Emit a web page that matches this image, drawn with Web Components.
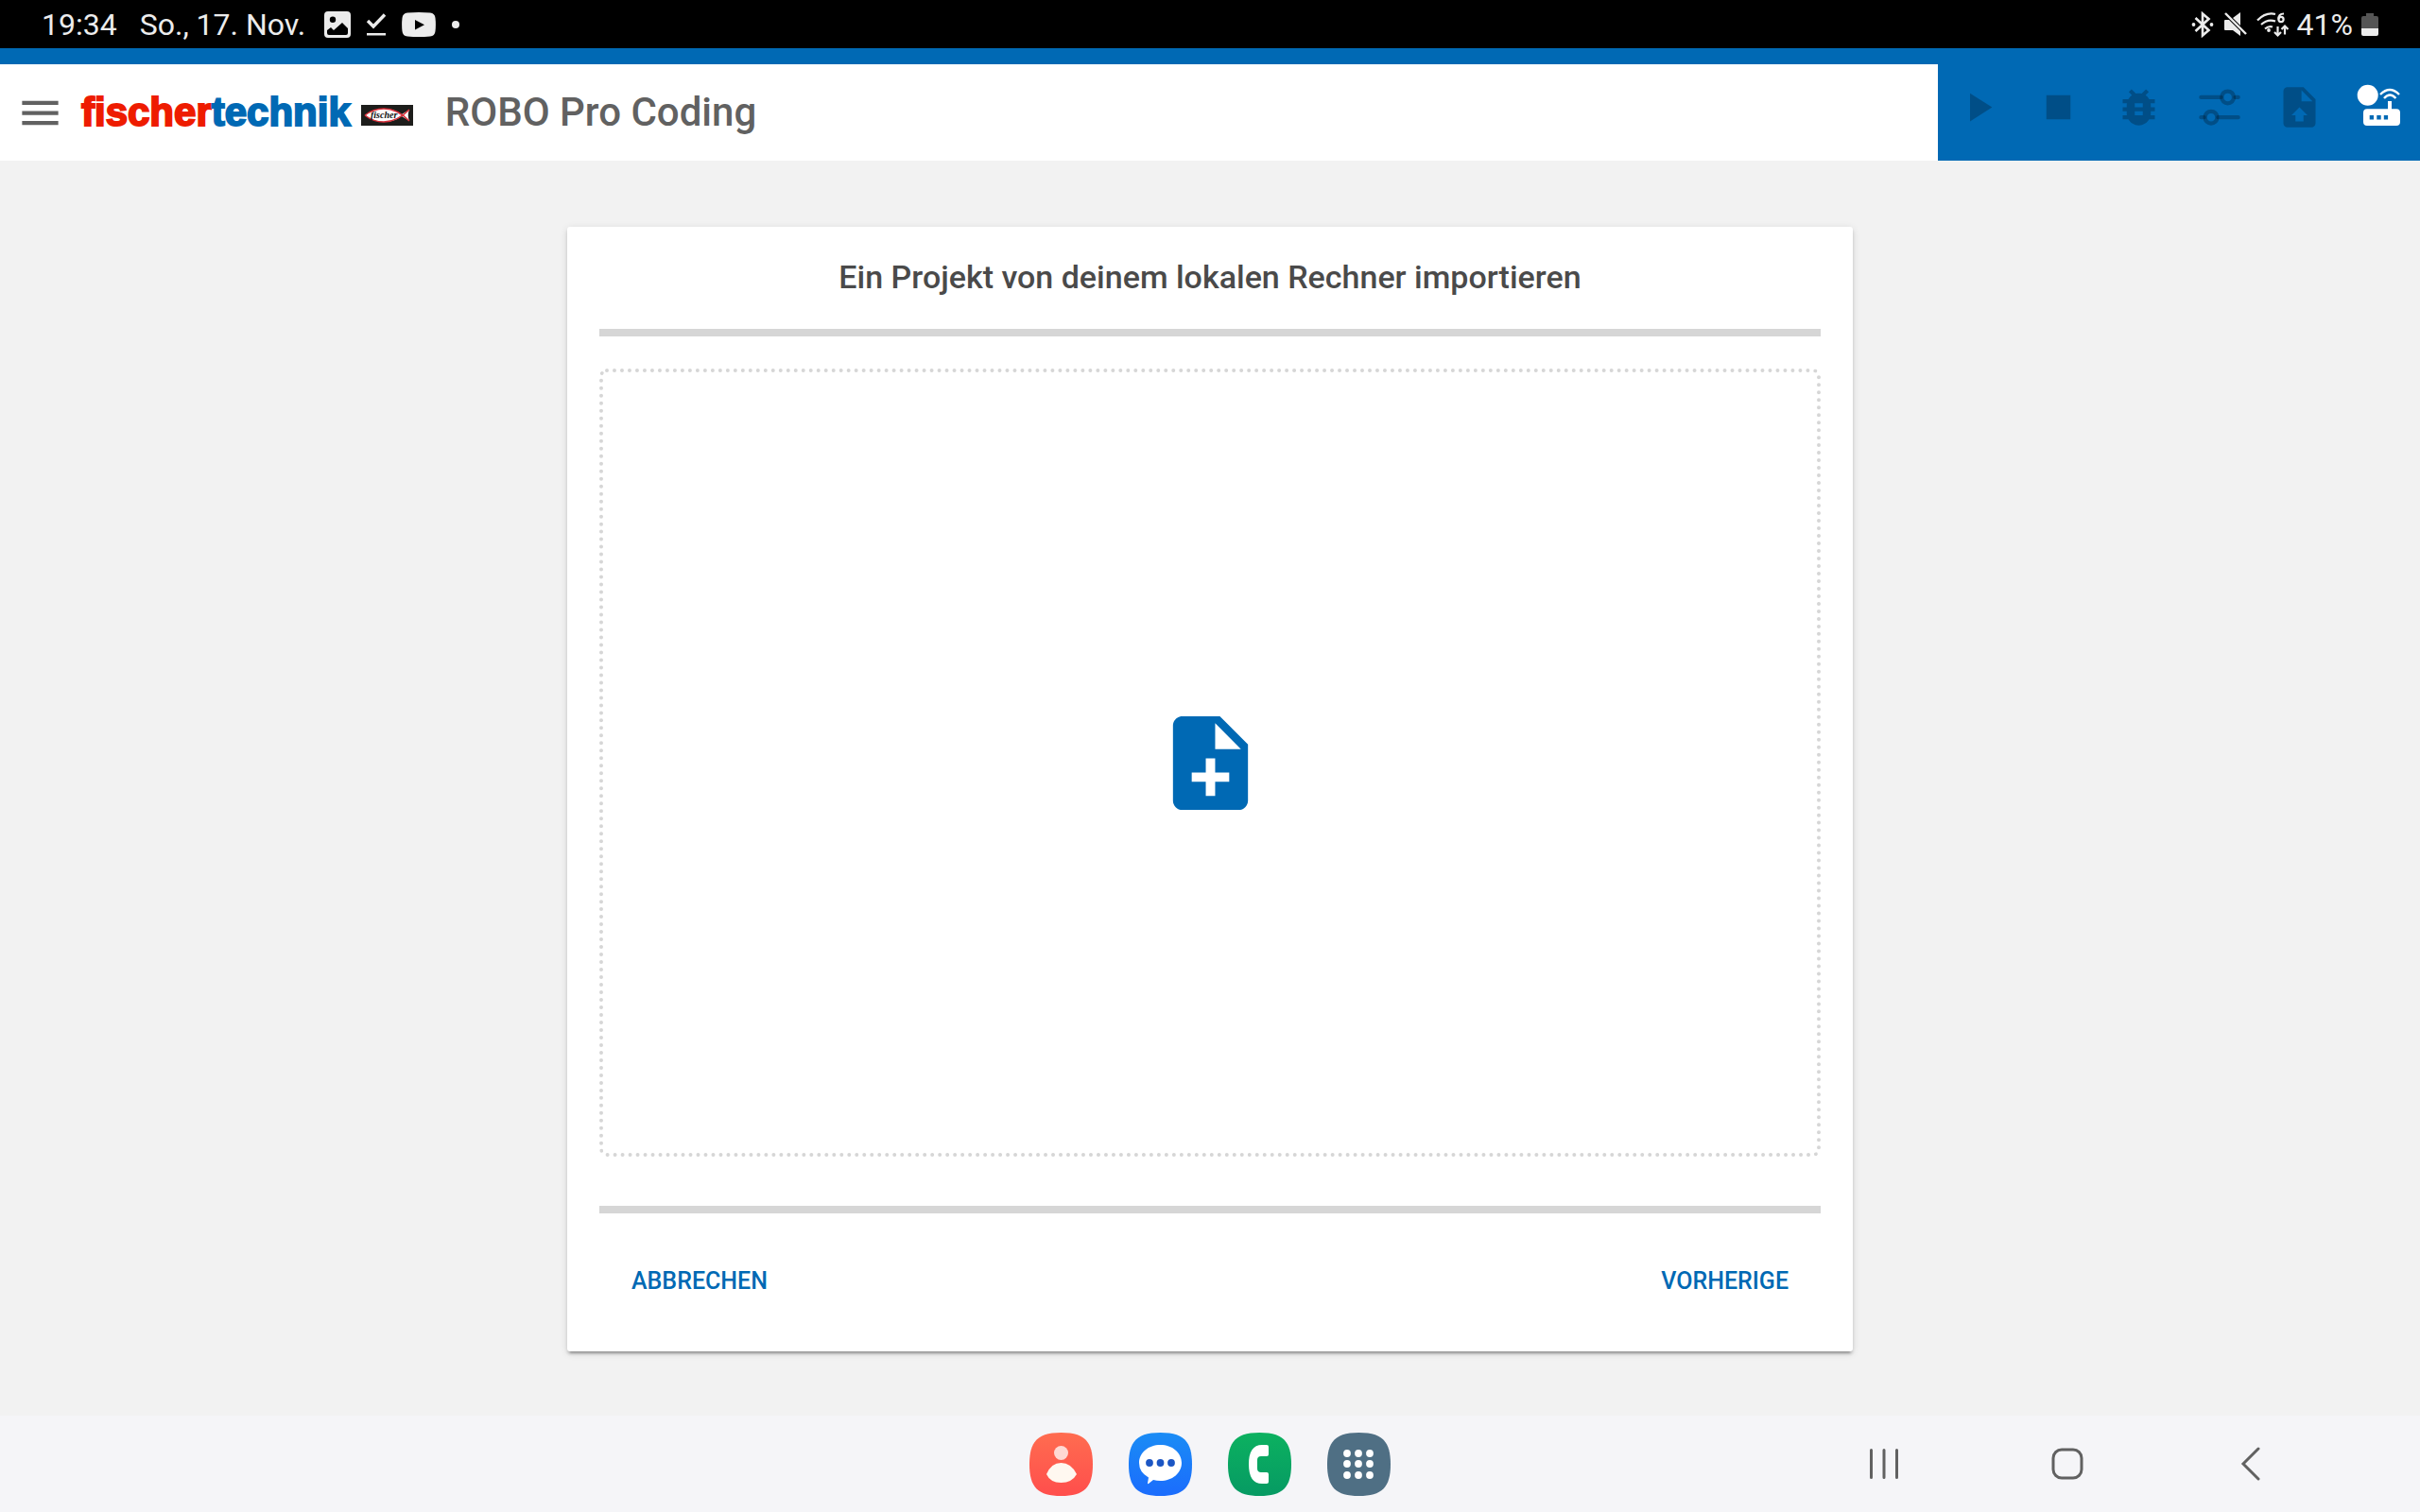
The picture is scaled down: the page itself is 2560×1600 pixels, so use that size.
<!DOCTYPE html>
<html lang="de">
<head>
<meta charset="utf-8">
<meta name="viewport" content="width=device-width, initial-scale=1">
<title>ROBO Pro Coding</title>
<style>
  html {
    --brand: #0069b4;
    --rule: #d6d6d6;
    --icon: #616161;
    font-family: Roboto, 'Noto Sans', sans-serif;
  }

  body {
    margin: 0;
    background: #f2f2f2;
  }
</style>
</head>
<body>
<robo-app></robo-app>

<script>
const NOTE = 'M14 2H6c-1.1 0-2 .9-2 2v16c0 1.1.9 2 2 2h12c1.1 0 2-.9 2-2V8l-6-6z';
const FOLD = 'M13 9V3.5L18.5 9z';

const ICONS = {
  menu: '<path d="M3 18h18v-2H3v2zm0-5h18v-2H3v2zm0-7v2h18V6H3z"/>',
  play: '<path d="M8 5v14l11-7z"/>',
  stop: '<path d="M6 6h12v12H6z"/>',
  debug: '<path d="M20 8h-2.81c-.45-.78-1.07-1.45-1.82-1.96L17 4.41 15.59 3l-2.17 2.17C12.96 5.06 12.49 5 12 5c-.49 0-.96.06-1.41.17L8.41 3 7 4.41l1.62 1.63C7.88 6.55 7.26 7.22 6.81 8H4v2h2.09c-.05.33-.09.66-.09 1v1H4v2h2v1c0 .34.04.67.09 1H4v2h2.81c1.04 1.79 2.97 3 5.19 3s4.15-1.21 5.19-3H20v-2h-2.09c.05-.33.09-.66.09-1v-1h2v-2h-2v-1c0-.34-.04-.67-.09-1H20V8zm-6 8h-4v-2h4v2zm0-4h-4v-2h4v2z"/>',
  tune: '<g fill="none" stroke="currentColor" stroke-width="2" stroke-linecap="round"><circle cx="16.300" cy="7" r="3"/><circle cx="8" cy="17" r="3"/><path d="M3 7h10M20 7h1.500M3 17h1.500M11.500 17H21.500"/></g>',
  upload: `<path fill-rule="evenodd" d="${NOTE}${FOLD}M12 12l-4 4h2v3h4v-3h2z"/>`,
  noteAdd: `<path fill-rule="evenodd" d="${NOTE}${FOLD}M16 16h-3v3h-2v-3H8v-2h3v-3h2v3h3z"/>`
};

const icon = (name) => `<svg viewBox="0 0 24 24" fill="currentColor" aria-hidden="true">${ICONS[name]}</svg>`;

class StatusBar extends HTMLElement {
  constructor() {
    super();
    this.attachShadow({ mode: 'open' });
    this.shadowRoot.innerHTML = `
      <style>
        :host {
          display: flex;
          justify-content: space-between;
          align-items: center;
          height: 51px;
          padding: 0 44px;
          background: #000;
          color: #ececec;
          font-size: 32px;
          line-height: 38px;
        }

        div {
          display: flex;
          align-items: center;
        }

        .left {
          gap: 20px;
        }

        .date {
          padding-left: 4px;
        }

        .notes {
          gap: 16px;
        }

        .right {
          gap: 9px;
        }

        svg {
          display: block;
          fill: currentColor;
        }
      </style>
      <div class="left">
        <span>19:34</span>
        <span class="date">So., 17. Nov.</span>
        <div class="notes">
          <svg width="28" height="28" viewBox="0 0 28 28"><path fill-rule="evenodd" d="M4 0h20a4 4 0 0 1 4 4v20a4 4 0 0 1-4 4H4a4 4 0 0 1-4-4V4a4 4 0 0 1 4-4zM9 5.500a3.200 3.200 0 1 0 0 6.400 3.200 3.200 0 0 0 0-6.400zM3 20v3a2 2 0 0 0 2 2h18a2 2 0 0 0 2-2v-5l-6-6-9 8-3-3z"/></svg>
          <svg width="22" height="28" viewBox="0 0 22 28"><path d="M2 10l6 6L20 3.500" fill="none" stroke="currentColor" stroke-width="3.400"/><path d="M1 23h20v2.500H1z"/></svg>
          <svg width="36" height="28" viewBox="0 0 36 28"><path fill-rule="evenodd" d="M6 1.500Q18 .5 30 1.500 35 2 35.500 7q.8 7 0 14-.5 5-5.500 5.500-12 1-24 0Q1 26 .5 21q-.8-7 0-14Q1 2 6 1.500zM14 9v10.500l10-5.200z"/></svg>
          <svg width="10" height="28" viewBox="0 0 10 28"><circle cx="5" cy="14" r="4"/></svg>
        </div>
      </div>
      <div class="right">
        <svg width="26" height="28" viewBox="0 0 26 28"><path d="M5.500 7l14 13L13 25.500v-23L19.500 8l-14 13" fill="none" stroke="currentColor" stroke-width="2.600"/><circle cx="3.500" cy="14" r="1.900"/><circle cx="22.500" cy="14" r="1.900"/></svg>
        <svg width="26" height="28" viewBox="0 0 26 28"><path d="M10 7l8-6v14zM2 9h4l12 12v5l-8-6H2q-1 0-1-1v-9q0-1 1-1z"/><path d="M2 2l22 22" stroke="currentColor" stroke-width="2.400"/></svg>
        <svg width="34" height="28" viewBox="0 0 34 28"><g fill="none" stroke="currentColor" stroke-width="2.200"><path d="M1 9.500Q10 .5 20 3M5 14q7-6.500 15-3.500M9 18.500q4-3.500 8-2"/><path d="M29 2.500q-6 0-5.500 6" /><circle cx="26" cy="8.500" r="2.600"/><path d="M22.500 16v9.500M19 22l3.500 3.500L26 22M30 24.500v-9M26.500 19l3.500-3.500 3.500 3.500"/></g><circle cx="13" cy="20" r="1.900"/></svg>
        <span>41%</span>
        <svg width="18" height="26" viewBox="0 0 18 26"><path d="M5 1h8v3h3q2 0 2 2v11H0V6q0-2 2-2h3z" fill="#555"/><path d="M0 17h18v6q0 2-2 2H2q-2 0-2-2z"/></svg>
      </div>
    `;
  }
}

class BrandLogo extends HTMLElement {
  constructor() {
    super();
    this.attachShadow({ mode: 'open' });
    this.shadowRoot.innerHTML = `
      <style>
        :host {
          display: flex;
          align-items: baseline;
          gap: 11px;
          font: bold 42px/48px 'Liberation Sans', Arial, sans-serif;
        }

        .word {
          color: #ee1c00;
          -webkit-text-stroke: 2px currentColor;
        }

        .blue {
          color: var(--brand);
        }
      </style>
      <span class="word">fischer<span class="blue">technik</span></span>
      <svg width="55" height="22" viewBox="0 0 55 22" aria-hidden="true">
        <path d="M0 0h55v22H0z" fill="#1d1d1b"/>
        <path d="M4 11Q13 4 24 4q11 0 19 6l8-5q-2.500 6 0 12l-8-5q-8 6-19 6Q13 18 4 11z" fill="#fff"/>
        <path d="M4 11Q13 4 24 4q14 0 27 13M51 5Q38 18 24 18 13 18 4 11" fill="none" stroke="#d8303a" stroke-width="1.500"/>
        <text x="10" y="14" font-family="Liberation Serif, serif" font-size="10" font-style="italic" font-weight="bold" fill="#111">fischer</text>
      </svg>
    `;
  }
}

class ToolButton extends HTMLElement {
  constructor() {
    super();
    this.attachShadow({ mode: 'open' });
    this.shadowRoot.innerHTML = `
      <style>
        :host {
          display: block;
        }

        button {
          display: flex;
          justify-content: center;
          width: 100%;
          padding: 0;
          border: 0;
          background: none;
          color: inherit;
          cursor: pointer;
        }

        button:disabled {
          color: rgb(0 0 0 / 25%);
          cursor: default;
        }

        svg,
        ::slotted(svg) {
          display: block;
          width: 51px;
          height: 51px;
        }
      </style>
      <button type="button"><slot></slot></button>
    `;
  }

  connectedCallback() {
    const button = this.shadowRoot.querySelector('button');
    const name = this.getAttribute('icon');
    button.disabled = this.hasAttribute('disabled');
    button.setAttribute('aria-label', this.getAttribute('label') ?? '');
    if (name) {
      button.innerHTML = icon(name);
    }
  }
}

class AppHeader extends HTMLElement {
  constructor() {
    super();
    this.attachShadow({ mode: 'open' });
    this.shadowRoot.innerHTML = `
      <style>
        :host {
          display: flex;
          height: 102px;
          border-top: 17px solid var(--brand);
          background: #fff;
        }

        .title {
          flex: 1;
          display: flex;
          align-items: center;
          padding-left: 17px;
          color: var(--icon);
        }

        brand-logo {
          margin: 0 34px 0 18px;
        }

        h1 {
          margin: 0;
          font-size: 42px;
          font-weight: 500;
          line-height: 48px;
        }

        nav {
          display: grid;
          grid-template-columns: repeat(6, 85px);
          align-items: center;
          padding-bottom: 11px;
          background: var(--brand);
          color: #fff;
        }
      </style>
      <div class="title">
        <tool-button icon="menu" label="Menü"></tool-button>
        <brand-logo></brand-logo>
        <h1><slot></slot></h1>
      </div>
      <nav>
        <tool-button icon="play" label="Starten" disabled></tool-button>
        <tool-button icon="stop" label="Stoppen" disabled></tool-button>
        <tool-button icon="debug" label="Debuggen" disabled></tool-button>
        <tool-button icon="tune" label="Konfiguration" disabled></tool-button>
        <tool-button icon="upload" label="Hochladen" disabled></tool-button>
        <tool-button label="Controller verbinden">
          <svg viewBox="0 0 51 51" fill="currentColor" aria-hidden="true">
            <circle cx="12.700" cy="12.700" r="11"/>
            <path fill-rule="evenodd" d="M12 27.300h22V19h4v8.300h5a4 4 0 0 1 4 4V41a4 4 0 0 1-4 4H12a4 4 0 0 1-4-4v-9.700a4 4 0 0 1 4-4zM14.700 34v4.500h4.300V34zm7.600 0v4.500h4.400V34zm7.500 0v4.500h4.300V34z"/>
            <path d="M26 12q10-10 20 0M30 16q6.200-7 12.400 0" fill="none" stroke="currentColor" stroke-width="2.400"/>
          </svg>
        </tool-button>
      </nav>
    `;
  }
}

class ImportDialog extends HTMLElement {
  constructor() {
    super();
    this.attachShadow({ mode: 'open' });
    this.shadowRoot.innerHTML = `
      <style>
        :host {
          display: flex;
          flex-direction: column;
          box-sizing: border-box;
          width: 100%;
          max-width: 1360px;
          padding: 33px 34px 44px;
          border-radius: 3px;
          background: #fff;
          box-shadow:
            0 5px 2px -3px rgb(0 0 0 / 20%),
            0 3px 3px rgb(0 0 0 / 14%),
            0 2px 8px rgb(0 0 0 / 12%);
        }

        h2 {
          margin: 0 0 35px;
          color: #4a4a4a;
          font-size: 34px;
          font-weight: 500;
          line-height: 40px;
          text-align: center;
        }

        hr {
          width: 100%;
          height: 8px;
          margin: 0;
          border: 0;
          background: var(--rule);
        }

        .drop {
          flex: 1;
          display: flex;
          align-items: center;
          justify-content: center;
          min-height: 300px;
          margin: 34px 0 52px;
          border: 4px dotted var(--rule);
          border-radius: 8px;
          background: none;
          color: var(--brand);
          cursor: pointer;
        }

        .drop svg {
          width: 119px;
          height: 119px;
        }

        .actions {
          display: flex;
          justify-content: space-between;
          margin-top: 41px;
        }

        .actions button {
          height: 61px;
          padding: 0 34px;
          border: 0;
          background: none;
          color: var(--brand);
          font: 500 25px/30px Roboto, sans-serif;
          text-transform: uppercase;
          cursor: pointer;
        }
      </style>
      <h2><slot></slot></h2>
      <hr>
      <button class="drop" type="button" aria-label="Datei auswählen">${icon('noteAdd')}</button>
      <hr>
      <div class="actions">
        <button type="button">Abbrechen</button>
        <button type="button">Vorherige</button>
      </div>
    `;
  }
}

// Rounded app tile; the colours and the glyph come from attributes.
class DockApp extends HTMLElement {
  constructor() {
    super();
    this.attachShadow({ mode: 'open' });
    this.shadowRoot.innerHTML = `
      <style>
        :host {
          display: block;
        }

        button {
          display: block;
          padding: 0;
          border: 0;
          background: none;
          cursor: pointer;
        }

        svg {
          display: block;
        }
      </style>
      <button type="button"></button>
    `;
  }

  connectedCallback() {
    const button = this.shadowRoot.querySelector('button');
    const [top, bottom] = this.getAttribute('colors').split(' ');
    button.setAttribute('aria-label', this.getAttribute('label'));
    button.innerHTML = `
      <svg width="67" height="67" viewBox="0 0 67 67" aria-hidden="true">
        <defs><linearGradient id="fill" x2="0" y2="1"><stop stop-color="${top}"/><stop offset="1" stop-color="${bottom}"/></linearGradient></defs>
        <path d="M33.500 0C58 0 67 9 67 33.500S58 67 33.500 67 0 58 0 33.500 9 0 33.500 0z" fill="url(#fill)"/>
        ${DockApp.glyphs[this.getAttribute('glyph')]}
      </svg>
    `;
  }

  static glyphs = {
    contact: '<circle cx="33.500" cy="21.500" r="7.500" fill="#ffd9d3"/><path d="M18 44q5-12 15.500-12T50 44q-5 9-16.500 9T18 44z" fill="#fff8f0"/>',
    chat: '<path d="M33.500 13C46 13 56 21 56 32s-10 19-22.500 19q-4 0-7.500-1l-5 4q-1 .5-1-.5l1-6Q11 42 11 32c0-11 10-19 22.500-19z" fill="#fff"/><g fill="#1c56c4"><circle cx="22" cy="32" r="3.900"/><circle cx="33.500" cy="32" r="3.900"/><circle cx="45" cy="32" r="3.900"/></g>',
    phone: '<path d="M36 13h5q2 0 2 2v8q0 2-2 2h-6q-4 0-4 4v9q0 4 4 4h6q2 0 2 2v8q0 2-2 2h-5Q22 54 22 33.500T36 13z" fill="#fff"/>',
    apps: `<g fill="#fff">${[21, 33, 45].map((x) => [22, 33, 45].map((y) => `<circle cx="${x}" cy="${y}" r="3.900"/>`).join('')).join('')}</g>`
  };
}

class SystemBar extends HTMLElement {
  constructor() {
    super();
    this.attachShadow({ mode: 'open' });
    this.shadowRoot.innerHTML = `
      <style>
        :host {
          display: grid;
          grid-template-columns: 1fr auto 1fr;
          align-items: center;
          height: 102px;
          background: #f5f5f8;
        }

        .apps {
          display: flex;
          grid-column: 2;
          gap: 38px;
        }

        .keys {
          display: grid;
          grid-template-columns: repeat(3, 194px);
          justify-content: end;
          padding-right: 82px;
          color: var(--icon);
        }

        .keys button {
          display: flex;
          justify-content: center;
          padding: 0;
          border: 0;
          background: none;
          color: inherit;
          cursor: pointer;
        }

        .keys svg {
          width: 36px;
          height: 36px;
          fill: none;
          stroke: currentColor;
          stroke-width: 3;
          stroke-linecap: round;
        }
      </style>
      <div class="apps">
        <dock-app glyph="contact" label="Kontakte" colors="#ff6c50 #ff4e4c"></dock-app>
        <dock-app glyph="chat" label="Nachrichten" colors="#1a8cf5 #1b6cfd"></dock-app>
        <dock-app glyph="phone" label="Telefon" colors="#0cb160 #069a63"></dock-app>
        <dock-app glyph="apps" label="Alle Apps" colors="#4f6f84 #4f6f84"></dock-app>
      </div>
      <div class="keys">
        <button type="button" aria-label="Letzte Apps"><svg viewBox="0 0 36 36"><path d="M4.500 3.500v29M18 3.500v29M31.500 3.500v29"/></svg></button>
        <button type="button" aria-label="Startbildschirm"><svg viewBox="0 0 36 36"><rect x="3" y="3" width="30" height="30" rx="9"/></svg></button>
        <button type="button" aria-label="Zurück"><svg viewBox="0 0 36 36"><path d="M26 2L10 18l16 16"/></svg></button>
      </div>
    `;
  }
}

class RoboApp extends HTMLElement {
  constructor() {
    super();
    this.attachShadow({ mode: 'open' });
    this.shadowRoot.innerHTML = `
      <style>
        :host {
          display: flex;
          flex-direction: column;
          min-height: 100vh;
        }

        main {
          flex: 1;
          display: flex;
          justify-content: center;
          padding: 70px 34px 68px;
        }
      </style>
      <status-bar></status-bar>
      <app-header>ROBO Pro Coding</app-header>
      <main>
        <import-dialog>Ein Projekt von deinem lokalen Rechner importieren</import-dialog>
      </main>
      <system-bar></system-bar>
    `;
  }
}

customElements.define('status-bar', StatusBar);
customElements.define('brand-logo', BrandLogo);
customElements.define('tool-button', ToolButton);
customElements.define('app-header', AppHeader);
customElements.define('import-dialog', ImportDialog);
customElements.define('dock-app', DockApp);
customElements.define('system-bar', SystemBar);
customElements.define('robo-app', RoboApp);
</script>
</body>
</html>
